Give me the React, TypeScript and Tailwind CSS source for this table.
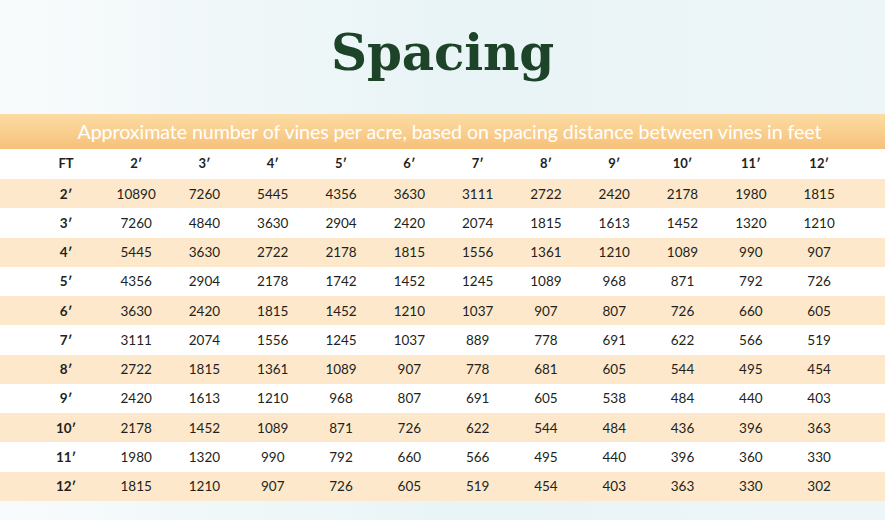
const cols = [2, 3, 4, 5, 6, 7, 8, 9, 10, 11, 12];

const rows: number[][] = [
  [10890, 7260, 5445, 4356, 3630, 3111, 2722, 2420, 2178, 1980, 1815],
  [7260, 4840, 3630, 2904, 2420, 2074, 1815, 1613, 1452, 1320, 1210],
  [5445, 3630, 2722, 2178, 1815, 1556, 1361, 1210, 1089, 990, 907],
  [4356, 2904, 2178, 1742, 1452, 1245, 1089, 968, 871, 792, 726],
  [3630, 2420, 1815, 1452, 1210, 1037, 907, 807, 726, 660, 605],
  [3111, 2074, 1556, 1245, 1037, 889, 778, 691, 622, 566, 519],
  [2722, 1815, 1361, 1089, 907, 778, 681, 605, 544, 495, 454],
  [2420, 1613, 1210, 968, 807, 691, 605, 538, 484, 440, 403],
  [2178, 1452, 1089, 871, 726, 622, 544, 484, 436, 396, 363],
  [1980, 1320, 990, 792, 660, 566, 495, 440, 396, 360, 330],
  [1815, 1210, 907, 726, 605, 519, 454, 403, 363, 330, 302],
];

const grid = "grid grid-cols-[72px_repeat(11,68.3px)] pl-[30px] items-center";

export default function App() {
  return (
    <div className="w-[885px] h-[520px] overflow-hidden bg-gradient-to-r from-[#f8fbfc] via-[#e9f4f6] to-[#edf5f8] font-['Lato',sans-serif] text-[#231f20]">
      <div className="h-[114px] flex justify-center pt-[21px]">
        <h1 className="font-['DejaVu_Serif',serif] font-bold text-[50px] leading-[64px] text-[#1d4428] tracking-[-0.2px]">
          Spacing
        </h1>
      </div>

      <div className="h-[35px] bg-gradient-to-b from-[#fcdba3] via-[#f9cf8f] to-[#f6c079] flex items-center justify-center pl-[14px]">
        <p className="text-white text-[19.7px] leading-none font-['Lato',sans-serif] tracking-[-0.1px]">
          Approximate number of vines per acre, based on spacing distance between vines in feet
        </p>
      </div>

      <div className={`${grid} h-[30px] bg-white text-[13px] font-bold`}>
        <div className="text-center">FT</div>
        {cols.map((c) => (
          <div key={c} className="text-center">
            {c}′
          </div>
        ))}
      </div>

      {rows.map((r, i) => (
        <div
          key={i}
          className={`${grid} h-[29.25px] text-[13.5px] ${i % 2 === 0 ? "bg-[#fde8cb]" : "bg-white"}`}
        >
          <div className="text-center font-bold">{cols[i]}′</div>
          {r.map((v, j) => (
            <div key={j} className="text-center">
              {v}
            </div>
          ))}
        </div>
      ))}
    </div>
  );
}
